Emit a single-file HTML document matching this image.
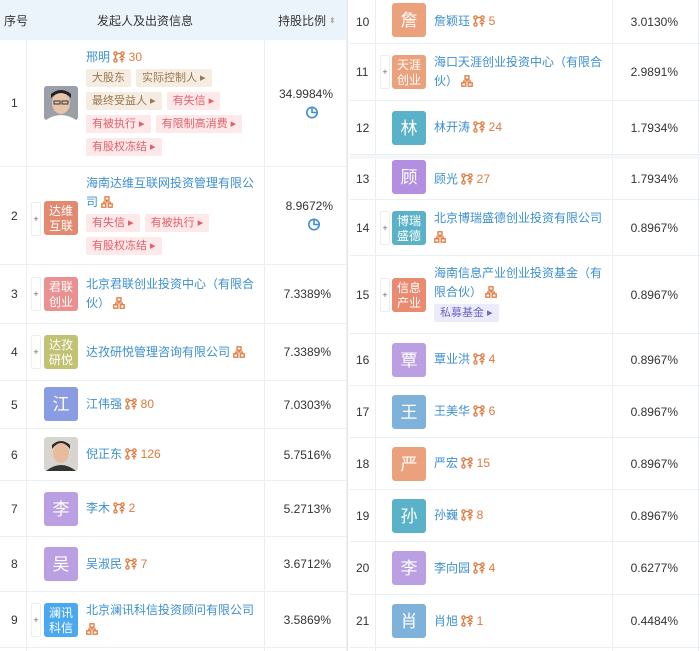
<!DOCTYPE html>
<html><head><meta charset="utf-8"><style>
*{margin:0;padding:0;box-sizing:border-box}
body{width:700px;height:651px;background:#fff;position:relative;overflow:hidden;font-family:"Liberation Sans","Noto Sans CJK SC",sans-serif;font-size:12px;color:#333}
.p{position:absolute;overflow:hidden}
.r{position:absolute;left:0;right:0;border-bottom:1px solid #e9eff3}
.n{position:absolute;top:0;bottom:0;display:flex;align-items:center;font-size:12px;color:#333}
.av{position:absolute;width:34px;height:34px;border-radius:3px;color:#fff;display:flex;align-items:center;justify-content:center;font-size:17px;line-height:1}
.av.s{font-size:12px;line-height:15px;text-align:center;padding-top:1px}
.pl{position:absolute;width:10px;height:34px;border:1px solid #eee;border-radius:2px;font-size:9px;color:#666;display:flex;align-items:center;justify-content:center}
.info{position:absolute;top:0;bottom:0;display:flex;flex-direction:column;justify-content:center}
.nm{color:#3c8fd0;font-size:12px;line-height:19px}
.cnt{color:#e0783c}
.pc{position:absolute;top:0;bottom:0;display:flex;flex-direction:column;align-items:flex-end;justify-content:center;font-size:12px;color:#333}
.tags{display:flex;flex-wrap:wrap;width:170px}
.t{font-size:11px;height:18px;line-height:18px;padding:0 6px;margin:2px 5px 3px 0;border-radius:2px}
.b{background:#f5ede2;color:#9c7650}
.k{background:#fde9ea;color:#e0606a}
.u{background:#ecebfc;color:#6d66c0}
.vl{position:absolute;top:0;bottom:0;width:1px;background:#e9eff3}
svg{vertical-align:-2px}
</style></head><body>
<svg width="0" height="0" style="position:absolute"><defs>
<symbol id="br" viewBox="0 0 12 12"><g fill="none" stroke="#e0783c" stroke-width="1.3"><circle cx="2.5" cy="2.5" r="1.6"/><circle cx="9.5" cy="2.5" r="1.6"/><circle cx="2.5" cy="9.5" r="1.6"/><path d="M4.1 2.5h3.8M2.5 4.1v3.8M6.5 7l2.5-2 2.5 2M7.2 8.5h3.6M9 7v4.5"/></g></symbol>
<symbol id="tr" viewBox="0 0 12 12"><g fill="none" stroke="#e0783c" stroke-width="1.3"><rect x="4" y="0.8" width="4" height="3.4"/><rect x="0.8" y="7.8" width="4" height="3.4"/><rect x="7.2" y="7.8" width="4" height="3.4"/><path d="M6 4.2v1.8M2.8 7.8V6h6.4v1.8"/></g></symbol>
<symbol id="pie" viewBox="0 0 14 14"><g fill="none" stroke="#3c8fd0" stroke-width="1.6"><circle cx="7" cy="7.5" r="5.2"/><path d="M7 2.3V7.5h5.2"/></g></symbol>
</defs></svg>

<!-- LEFT PANEL -->
<div class="p" style="left:0;top:0;width:348px;height:651px;border-right:1px solid #e6e6e6">
<div class="r" style="top:0;height:40px;background:#ebf4fb;border:none">
 <div class="n" style="left:4px">序号</div>
 <div class="n" style="left:97px">发起人及出资信息</div>
 <div class="n" style="left:278px">持股比例 <span style="font-size:8px;color:#aaa;margin-left:3px">⬍</span></div>
</div>
<div class="vl" style="left:26px;top:40px"></div>
<div class="vl" style="left:264px;top:40px"></div>
<div class="vl" style="left:346px;top:40px"></div>

<div class="r" style="top:40px;height:127px">
 <div class="n" style="left:11px">1</div>
 <div class="av" style="left:44px;top:46px;background:#ccc;overflow:hidden"><svg width="34" height="34" viewBox="0 0 34 34"><rect width="34" height="34" fill="#9a9fa8"/><ellipse cx="17" cy="17" rx="9" ry="11" fill="#e8c4a8"/><path d="M7 12q10-10 20 0v-4q-10-8-20 0z" fill="#222"/><rect x="10" y="15" width="6" height="3" fill="none" stroke="#333"/><rect x="18" y="15" width="6" height="3" fill="none" stroke="#333"/><path d="M2 34q15-10 30 0z" fill="#fff"/></svg></div>
 <div class="info" style="left:86px">
  <div class="nm">邢明 <span class="cnt"><svg width="12" height="12"><use href="#br"/></svg> 30</span></div>
  <div class="tags"><span class="t b">大股东</span><span class="t b">实际控制人 ▸</span><span class="t b">最终受益人 ▸</span><span class="t k">有失信 ▸</span><span class="t k">有被执行 ▸</span><span class="t k">有限制高消费 ▸</span><span class="t k">有股权冻结 ▸</span></div>
 </div>
 <div class="pc" style="right:14px"><div>34.9984%</div><div style="margin:4px 14px 0 0"><svg width="14" height="14"><use href="#pie"/></svg></div></div>
</div>

<div class="r" style="top:167px;height:98px">
 <div class="n" style="left:11px">2</div>
 <div class="pl" style="left:31px;top:35px">+</div>
 <div class="av s" style="left:44px;top:34px;background:#e28a70">达维<br>互联</div>
 <div class="info" style="left:86px">
  <div class="nm" style="width:170px">海南达维互联网投资管理有限公司 <svg width="12" height="12"><use href="#tr"/></svg></div>
  <div class="tags"><span class="t k">有失信 ▸</span><span class="t k">有被执行 ▸</span><span class="t k">有股权冻结 ▸</span></div>
 </div>
 <div class="pc" style="right:14px"><div>8.9672%</div><div style="margin:4px 12px 0 0"><svg width="14" height="14"><use href="#pie"/></svg></div></div>
</div>

<div class="r" style="top:265px;height:59px">
 <div class="n" style="left:11px">3</div><div class="pl" style="left:31px;top:12px">+</div>
 <div class="av s" style="left:44px;top:12px;background:#ea9090">君联<br>创业</div>
 <div class="info" style="left:86px"><div class="nm" style="width:170px">北京君联创业投资中心（有限合伙） <svg width="12" height="12"><use href="#tr"/></svg></div></div>
 <div class="pc" style="right:16px">7.3389%</div>
</div>
<div class="r" style="top:324px;height:57px">
 <div class="n" style="left:11px">4</div><div class="pl" style="left:31px;top:11px">+</div>
 <div class="av s" style="left:44px;top:11px;background:#c2c274">达孜<br>研悦</div>
 <div class="info" style="left:86px"><div class="nm">达孜研悦管理咨询有限公司 <svg width="12" height="12"><use href="#tr"/></svg></div></div>
 <div class="pc" style="right:16px">7.3389%</div>
</div>
<div class="r" style="top:381px;height:48px">
 <div class="n" style="left:11px">5</div>
 <div class="av" style="left:44px;top:6px;background:#8a9ce2">江</div>
 <div class="info" style="left:86px"><div class="nm">江伟强 <span class="cnt"><svg width="12" height="12"><use href="#br"/></svg> 80</span></div></div>
 <div class="pc" style="right:16px">7.0303%</div>
</div>
<div class="r" style="top:429px;height:52px">
 <div class="n" style="left:11px">6</div>
 <div class="av" style="left:44px;top:8px;overflow:hidden"><svg width="34" height="34" viewBox="0 0 34 34"><rect width="34" height="34" fill="#d8d4d0"/><ellipse cx="17" cy="16" rx="8" ry="10" fill="#e6bc9c"/><path d="M8 12q9-12 18 0v-4q-9-8-18 0z" fill="#2a2a2a"/><path d="M2 34q15-12 30 0z" fill="#333"/></svg></div>
 <div class="info" style="left:86px"><div class="nm">倪正东 <span class="cnt"><svg width="12" height="12"><use href="#br"/></svg> 126</span></div></div>
 <div class="pc" style="right:16px">5.7516%</div>
</div>
<div class="r" style="top:481px;height:56px">
 <div class="n" style="left:11px">7</div>
 <div class="av" style="left:44px;top:11px;background:#baa0e2">李</div>
 <div class="info" style="left:86px"><div class="nm">李木 <span class="cnt"><svg width="12" height="12"><use href="#br"/></svg> 2</span></div></div>
 <div class="pc" style="right:16px">5.2713%</div>
</div>
<div class="r" style="top:537px;height:55px">
 <div class="n" style="left:11px">8</div>
 <div class="av" style="left:44px;top:10px;background:#baa0e2">吴</div>
 <div class="info" style="left:86px"><div class="nm">吴淑民 <span class="cnt"><svg width="12" height="12"><use href="#br"/></svg> 7</span></div></div>
 <div class="pc" style="right:16px">3.6712%</div>
</div>
<div class="r" style="top:592px;height:56px">
 <div class="n" style="left:11px">9</div><div class="pl" style="left:31px;top:11px">+</div>
 <div class="av s" style="left:44px;top:11px;background:#4aa8f0">澜讯<br>科信</div>
 <div class="info" style="left:86px"><div class="nm" style="width:170px">北京澜讯科信投资顾问有限公司 <svg width="12" height="12"><use href="#tr"/></svg></div></div>
 <div class="pc" style="right:16px">3.5869%</div>
</div>
</div>

<!-- RIGHT PANEL -->
<div class="p" style="left:350px;top:0;width:350px;height:651px">
<div class="vl" style="left:25px"></div>
<div class="vl" style="left:262px"></div>
<div class="vl" style="left:348px"></div>

<div class="r" style="top:0;height:44px">
 <div class="n" style="left:6px">10</div>
 <div class="av" style="left:42px;top:3px;background:#eba27c">詹</div>
 <div class="info" style="left:84px"><div class="nm">詹颖珏 <span class="cnt"><svg width="12" height="12"><use href="#br"/></svg> 5</span></div></div>
 <div class="pc" style="right:22px">3.0130%</div>
</div>
<div class="r" style="top:44px;height:57px">
 <div class="n" style="left:6px">11</div><div class="pl" style="left:30px;top:11px">+</div>
 <div class="av s" style="left:42px;top:11px;background:#eba27c">天涯<br>创业</div>
 <div class="info" style="left:84px"><div class="nm" style="width:170px">海口天涯创业投资中心（有限合伙） <svg width="12" height="12"><use href="#tr"/></svg></div></div>
 <div class="pc" style="right:22px">2.9891%</div>
</div>
<div class="r" style="top:101px;height:54px">
 <div class="n" style="left:6px">12</div>
 <div class="av" style="left:42px;top:10px;background:#5ab2c8">林</div>
 <div class="info" style="left:84px"><div class="nm">林开涛 <span class="cnt"><svg width="12" height="12"><use href="#br"/></svg> 24</span></div></div>
 <div class="pc" style="right:22px">1.7934%</div>
</div>
<div class="r" style="top:155px;height:45px;border-top:4px solid #f4f6f8">
 <div class="n" style="left:6px">13</div>
 <div class="av" style="left:42px;top:1px;background:#b28fe0">顾</div>
 <div class="info" style="left:84px"><div class="nm">顾光 <span class="cnt"><svg width="12" height="12"><use href="#br"/></svg> 27</span></div></div>
 <div class="pc" style="right:22px">1.7934%</div>
</div>
<div class="r" style="top:200px;height:56px">
 <div class="n" style="left:6px">14</div><div class="pl" style="left:30px;top:11px">+</div>
 <div class="av s" style="left:42px;top:11px;background:#5ab2c8">博瑞<br>盛德</div>
 <div class="info" style="left:84px"><div class="nm" style="width:172px">北京博瑞盛德创业投资有限公司 <svg width="12" height="12"><use href="#tr"/></svg></div></div>
 <div class="pc" style="right:22px">0.8967%</div>
</div>
<div class="r" style="top:256px;height:78px">
 <div class="n" style="left:6px">15</div><div class="pl" style="left:30px;top:22px">+</div>
 <div class="av s" style="left:42px;top:22px;background:#ea8a70">信息<br>产业</div>
 <div class="info" style="left:84px"><div class="nm" style="width:172px">海南信息产业创业投资基金（有限合伙） <svg width="12" height="12"><use href="#tr"/></svg></div><div class="tags"><span class="t u">私募基金 ▸</span></div></div>
 <div class="pc" style="right:22px">0.8967%</div>
</div>
<div class="r" style="top:334px;height:52px">
 <div class="n" style="left:6px">16</div>
 <div class="av" style="left:42px;top:9px;background:#baa0e2">覃</div>
 <div class="info" style="left:84px"><div class="nm">覃业洪 <span class="cnt"><svg width="12" height="12"><use href="#br"/></svg> 4</span></div></div>
 <div class="pc" style="right:22px">0.8967%</div>
</div>
<div class="r" style="top:386px;height:52px">
 <div class="n" style="left:6px">17</div>
 <div class="av" style="left:42px;top:9px;background:#7eb2da">王</div>
 <div class="info" style="left:84px"><div class="nm">王美华 <span class="cnt"><svg width="12" height="12"><use href="#br"/></svg> 6</span></div></div>
 <div class="pc" style="right:22px">0.8967%</div>
</div>
<div class="r" style="top:438px;height:52px">
 <div class="n" style="left:6px">18</div>
 <div class="av" style="left:42px;top:9px;background:#eba27c">严</div>
 <div class="info" style="left:84px"><div class="nm">严宏 <span class="cnt"><svg width="12" height="12"><use href="#br"/></svg> 15</span></div></div>
 <div class="pc" style="right:22px">0.8967%</div>
</div>
<div class="r" style="top:490px;height:52px">
 <div class="n" style="left:6px">19</div>
 <div class="av" style="left:42px;top:9px;background:#5ab2c8">孙</div>
 <div class="info" style="left:84px"><div class="nm">孙巍 <span class="cnt"><svg width="12" height="12"><use href="#br"/></svg> 8</span></div></div>
 <div class="pc" style="right:22px">0.8967%</div>
</div>
<div class="r" style="top:542px;height:53px">
 <div class="n" style="left:6px">20</div>
 <div class="av" style="left:42px;top:9px;background:#baa0e2">李</div>
 <div class="info" style="left:84px"><div class="nm">李向园 <span class="cnt"><svg width="12" height="12"><use href="#br"/></svg> 4</span></div></div>
 <div class="pc" style="right:22px">0.6277%</div>
</div>
<div class="r" style="top:595px;height:53px">
 <div class="n" style="left:6px">21</div>
 <div class="av" style="left:42px;top:9px;background:#7eb2da">肖</div>
 <div class="info" style="left:84px"><div class="nm">肖旭 <span class="cnt"><svg width="12" height="12"><use href="#br"/></svg> 1</span></div></div>
 <div class="pc" style="right:22px">0.4484%</div>
</div>
</div>
</body></html>
